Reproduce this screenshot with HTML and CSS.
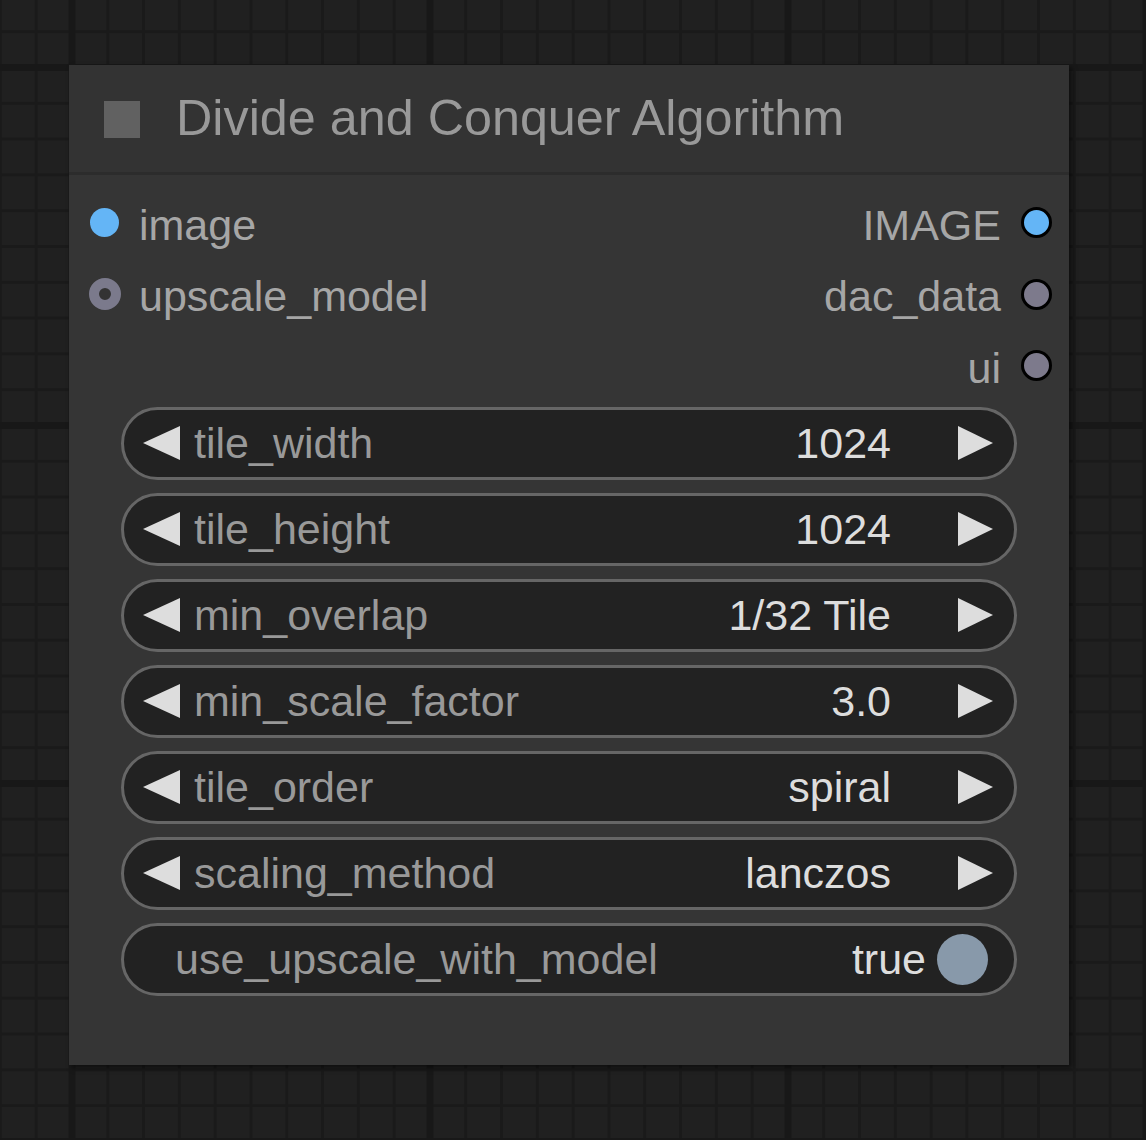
FILE: index.html
```html
<!DOCTYPE html>
<html>
<head>
<meta charset="utf-8">
<link rel="stylesheet" href="styles.css">
</head>
<body>
<div class="canvas">
  <div class="node">
    <div class="title">
      <span class="title-box"></span>
      <span class="title-text">Divide and Conquer Algorithm</span>
    </div>
    <div class="body">
      <div class="slots">
        <div class="slot-row">
          <div class="slot-in"><span class="dot dot-blue"></span><span class="slot-label">image</span></div>
          <div class="slot-out"><span class="slot-label">IMAGE</span><span class="dot dot-out dot-blue"></span></div>
        </div>
        <div class="slot-row">
          <div class="slot-in"><span class="dot dot-optional"></span><span class="slot-label">upscale_model</span></div>
          <div class="slot-out"><span class="slot-label">dac_data</span><span class="dot dot-out dot-gray"></span></div>
        </div>
        <div class="slot-row">
          <div class="slot-in"></div>
          <div class="slot-out"><span class="slot-label">ui</span><span class="dot dot-out dot-gray"></span></div>
        </div>
      </div>
      <div class="widgets">
        <div class="widget">
          <span class="arrow arrow-left"></span>
          <span class="w-label">tile_width</span>
          <span class="w-value">1024</span>
          <span class="arrow arrow-right"></span>
        </div>
        <div class="widget">
          <span class="arrow arrow-left"></span>
          <span class="w-label">tile_height</span>
          <span class="w-value">1024</span>
          <span class="arrow arrow-right"></span>
        </div>
        <div class="widget">
          <span class="arrow arrow-left"></span>
          <span class="w-label">min_overlap</span>
          <span class="w-value">1/32 Tile</span>
          <span class="arrow arrow-right"></span>
        </div>
        <div class="widget">
          <span class="arrow arrow-left"></span>
          <span class="w-label">min_scale_factor</span>
          <span class="w-value">3.0</span>
          <span class="arrow arrow-right"></span>
        </div>
        <div class="widget">
          <span class="arrow arrow-left"></span>
          <span class="w-label">tile_order</span>
          <span class="w-value">spiral</span>
          <span class="arrow arrow-right"></span>
        </div>
        <div class="widget">
          <span class="arrow arrow-left"></span>
          <span class="w-label">scaling_method</span>
          <span class="w-value">lanczos</span>
          <span class="arrow arrow-right"></span>
        </div>
        <div class="widget toggle">
          <span class="w-label">use_upscale_with_model</span>
          <span class="w-value">true</span>
          <span class="knob"></span>
        </div>
      </div>
    </div>
  </div>
</div>
</body>
</html>
```

FILE: styles.css
```css
html, body {
  margin: 0;
  padding: 0;
}

body {
  width: 1146px;
  height: 1140px;
  overflow: hidden;
  font-family: "Liberation Sans", Arial, sans-serif;
  background-color: #202020;
  background-image:
    linear-gradient(to right, #181818 7px, transparent 7px),
    linear-gradient(to bottom, #181818 7px, transparent 7px),
    linear-gradient(to right, #1a1a1a 3px, transparent 3px),
    linear-gradient(to bottom, #1a1a1a 3px, transparent 3px);
  background-size: 358px 358px, 358px 358px, 35.8px 35.8px, 35.8px 35.8px;
  background-position: 68.5px 0, 0 64px, 34.7px 0, 0 30.2px;
}

.canvas {
  padding: 65px 0 0 69px;
}

.node {
  width: 1000px;
  height: 1000px;
  background: #353535;
  box-shadow: 3px 3px 5px rgba(0, 0, 0, 0.55);
  display: flex;
  flex-direction: column;
}

.title {
  height: 107px;
  background: #333333;
  border-bottom: 3px solid #2c2c2c;
  display: flex;
  align-items: center;
  padding-left: 35px;
  box-sizing: content-box;
}

.title-box {
  width: 36px;
  height: 37px;
  background: #616161;
  margin-right: 36px;
  margin-top: 1px;
}

.title-text {
  font-size: 50.3px;
  color: #999999;
  line-height: 1;
}

.body {
  padding-top: 12px;
  display: flex;
  flex-direction: column;
}

.slots {
  display: flex;
  flex-direction: column;
}

.slot-row {
  height: 71.5px;
  display: flex;
  align-items: center;
  justify-content: space-between;
  padding: 0 17px 0 21px;
}

.slot-in, .slot-out {
  display: flex;
  align-items: center;
}

.slot-in .dot {
  margin-right: 20px;
}

.slot-out .dot {
  margin-left: 20px;
}

.slot-label {
  font-size: 43px;
  line-height: 1;
  color: #a6a6a6;
  padding-top: 5px;
}

.dot {
  display: block;
  width: 29px;
  height: 29px;
  border-radius: 50%;
  box-sizing: border-box;
}

.dot-blue {
  background: #64b5f6;
}

.dot-gray {
  background: #7d7a8c;
}

.dot-out {
  width: 31px;
  height: 31px;
  border: 3px solid #000;
}

.dot-optional {
  width: 32px;
  height: 32px;
  margin-left: -1.5px;
  border: 10.5px solid #7b7a8c;
  background: #333;
}

.slot-in .dot-optional {
  margin-right: 18.5px;
}

.widgets {
  margin-top: 5px;
  padding-left: 52px;
  display: flex;
  flex-direction: column;
  gap: 13px;
}

.widget {
  width: 896px;
  height: 73px;
  box-sizing: border-box;
  border: 3px solid #666666;
  border-radius: 37px;
  background: #222222;
  display: flex;
  align-items: center;
  padding: 0 21px 0 19px;
}

.arrow {
  display: block;
  width: 0;
  height: 0;
  border-top: 17.5px solid transparent;
  border-bottom: 17.5px solid transparent;
}

.arrow-left {
  border-right: 37px solid #dddddd;
  margin-right: 14px;
}

.arrow-right {
  border-left: 35px solid #dddddd;
  margin-left: 67px;
}

.w-label {
  flex: 1;
  font-size: 43px;
  line-height: 1;
  color: #999999;
}

.w-value {
  font-size: 43px;
  line-height: 1;
  color: #dddddd;
}

.toggle {
  padding: 0 26px 0 51px;
}

.knob {
  display: block;
  width: 51px;
  height: 51px;
  border-radius: 50%;
  background: #8899aa;
  margin-left: 11px;
}
```
